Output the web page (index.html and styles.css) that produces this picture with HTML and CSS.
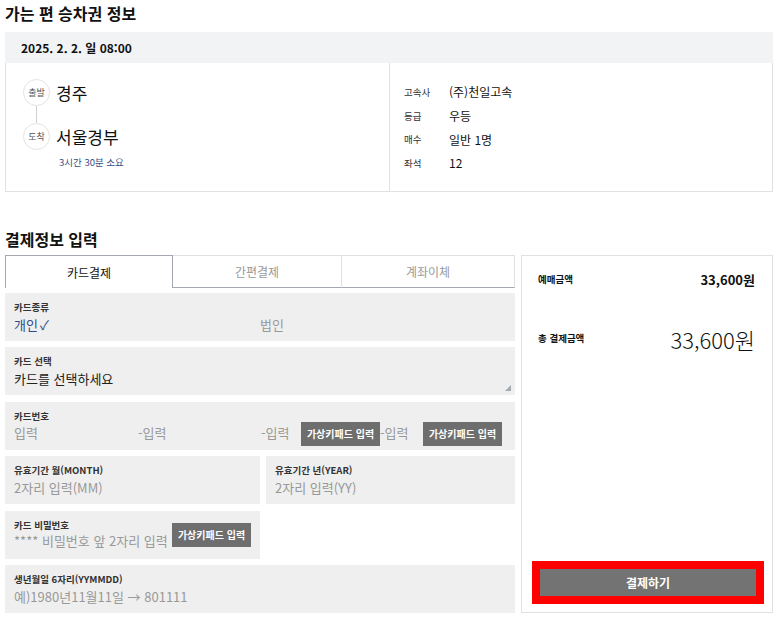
FILE: index.html
```html
<!DOCTYPE html>
<html lang="ko">
<head>
<meta charset="utf-8">
<link rel="stylesheet" href="styles.css">
</head>
<body>
<div class="page">
  <h2 class="title">가는 편 승차권 정보</h2>
  <div class="ticket">
    <div class="ticket-head">2025. 2. 2. 일 08:00</div>
    <div class="ticket-body">
      <div class="route">
        <div class="stop">
          <span class="circle">출발</span>
          <span class="place">경주</span>
        </div>
        <div class="connector"></div>
        <div class="stop">
          <span class="circle">도착</span>
          <span class="place">서울경부</span>
        </div>
        <div class="duration">3시간 30분 소요</div>
      </div>
      <div class="info">
        <div class="info-row"><span class="k">고속사</span><span class="v">(주)천일고속</span></div>
        <div class="info-row"><span class="k">등급</span><span class="v">우등</span></div>
        <div class="info-row"><span class="k">매수</span><span class="v">일반 1명</span></div>
        <div class="info-row"><span class="k">좌석</span><span class="v">12</span></div>
      </div>
    </div>
  </div>

  <h2 class="title title2">결제정보 입력</h2>
  <div class="pay">
    <div class="left">
      <div class="tabs">
        <div class="tab active t1">카드결제</div>
        <div class="tab t2">간편결제</div>
        <div class="tab t3">계좌이체</div>
      </div>
      <div class="fields">
        <div class="field">
          <div class="label">카드종류</div>
          <div class="value two">
            <span class="sel">개인<span class="check">✓</span></span>
            <span class="muted">법인</span>
          </div>
        </div>
        <div class="field textarea">
          <div class="label">카드 선택</div>
          <div class="value dark">카드를 선택하세요</div>
          <span class="grip"></span>
        </div>
        <div class="field">
          <div class="label">카드번호</div>
          <div class="value cardno">
            <span class="seg s1">입력</span>
            <span class="seg s2">-입력</span>
            <span class="seg s3">-입력</span>
            <span class="btn">가상키패드 입력</span>
            <span class="seg s4">-입력</span>
            <span class="btn">가상키패드 입력</span>
          </div>
        </div>
        <div class="row2">
          <div class="field">
            <div class="label">유효기간 월(MONTH)</div>
            <div class="value muted">2자리 입력(MM)</div>
          </div>
          <div class="field">
            <div class="label">유효기간 년(YEAR)</div>
            <div class="value muted">2자리 입력(YY)</div>
          </div>
        </div>
        <div class="row2">
          <div class="field pw">
            <div class="label">카드 비밀번호</div>
            <div class="value muted pwline"><span>**** 비밀번호 앞 2자리 입력</span><span class="btn">가상키패드 입력</span></div>
          </div>
        </div>
        <div class="field">
          <div class="label">생년월일 6자리(YYMMDD)</div>
          <div class="value muted">예)1980년11월11일 → 801111</div>
        </div>
      </div>
    </div>
    <div class="right">
      <div class="sum-row">
        <span class="sum-k">예매금액</span>
        <span class="sum-v">33,600원</span>
      </div>
      <div class="sum-row total">
        <span class="sum-k">총 결제금액</span>
        <span class="sum-big">33,600원</span>
      </div>
      <div class="pay-btn-wrap">
        <div class="pay-btn">결제하기</div>
      </div>
    </div>
  </div>
</div>
</body>
</html>
```

FILE: styles.css
```css
* { box-sizing: border-box; }
html, body { margin: 0; padding: 0; background: #fff; }
body {
  font-family: "Noto Sans CJK KR", "Noto Sans", sans-serif;
  color: #111;
}
.page { padding: 2px 7px 0 5px; width: 780px; }
.title {
  margin: 0;
  font-size: 16px;
  line-height: 22px;
  font-weight: 700;
  color: #111;
}
.title2 { margin-top: 36px; }

.ticket { margin-top: 8px; }
.ticket-head {
  height: 31px;
  background: #f2f3f5;
  font-size: 12px;
  font-weight: 700;
  line-height: 31px;
  padding-left: 16px;
}
.ticket-body {
  display: flex;
  height: 129px;
  border: 1px solid #e1e1e1;
  border-top: none;
}
.route {
  width: 384px;
  border-right: 1px solid #e1e1e1;
  padding: 16px 0 0 17px;
}
.stop { display: flex; align-items: center; }
.circle {
  width: 27px; height: 27px;
  border: 1px solid #e3e3e3;
  border-radius: 50%;
  font-size: 9px;
  color: #555;
  display: flex; align-items: center; justify-content: center;
  background: #fff;
}
.place { font-size: 17px; margin-left: 6px; line-height: 22px; color: #111; }
.connector { width: 1px; height: 17px; background: #d0d0d0; margin-left: 13px; }
.duration { font-size: 9.5px; color: #34508a; margin: 5px 0 0 36px; line-height: 14px; }

.info { padding: 17px 0 0 14px; }
.info-row { display: flex; align-items: center; height: 23.7px; }
.info-row .k { width: 45px; font-size: 9.5px; color: #333; }
.info-row .v { font-size: 12px; color: #111; }

.pay { display: flex; gap: 6px; margin-top: 5px; }
.left { width: 510px; }
.tabs { display: flex; height: 33px; }
.tab {
  display: flex; align-items: center; justify-content: center;
  font-size: 12px;
  color: #999;
  border-top: 1px solid #e0e0e0;
  border-right: 1px solid #e0e0e0;
  border-bottom: 1px solid #a3a7b0;
}
.t1 { width: 168px; }
.t2 { width: 169px; }
.t3 { flex: 1; }
.tab.active {
  color: #111;
  border: 1px solid #a3a7b0;
  border-bottom: none;
}
.fields { display: flex; flex-direction: column; gap: 6.4px; margin-top: 5px; }
.row2 { display: grid; grid-template-columns: 255px 249px; gap: 6px; }
.field {
  position: relative;
  background: #efefef;
  height: 48px;
  padding: 7px 9px 0 9px;
}
.label { font-size: 9.5px; font-weight: 700; color: #333; line-height: 14px; }
.value { font-size: 13px; line-height: 18px; margin-top: 2px; color: #333; }
.value.dark { color: #222; }
.muted { color: #999; }
.two { display: flex; }
.two .sel { width: 246px; color: #2d4a86; }
.check { margin-left: 2px; }
.grip {
  position: absolute;
  right: 4px; bottom: 4px;
  width: 0; height: 0;
  border-left: 6px solid transparent;
  border-bottom: 6px solid #a5a9b2;
}
.cardno { display: flex; align-items: center; color: #999; margin-top: -3px; }
.cardno .s1 { width: 124px; }
.cardno .s2 { width: 123px; }
.cardno .s3 { width: 40px; }
.cardno .s4 { width: 43px; }
.btn {
  display: inline-flex; align-items: center; justify-content: center;
  height: 24px;
  padding: 0 6px;
  background: #6e6e6e;
  color: #fff;
  font-size: 10px;
  font-weight: 700;
  white-space: nowrap;
}
.cardno .btn { width: 79px; margin-top: 2px; }
.pwline { display: flex; align-items: center; margin-top: 0; }
.pwline span:first-child { width: 159px; }
.pwline .btn { width: 79px; margin-top: -12px; }

.right {
  width: 252px;
  height: 358px;
  border: 1px solid #e1e1e1;
  display: flex;
  flex-direction: column;
  padding: 0 8px 8px 10px;
}
.sum-row { display: flex; justify-content: space-between; align-items: center; padding: 0 9px 0 6px; }
.sum-row:first-child { margin-top: 14px; height: 18px; }
.sum-k { font-size: 9.5px; font-weight: 700; color: #111; }
.sum-v { font-size: 13px; font-weight: 700; color: #111; }
.total { margin-top: 35px; height: 32px; }
.total .sum-k { margin-top: -3px; }
.sum-big { font-size: 22px; font-weight: 300; color: #111; }
.pay-btn-wrap {
  margin-top: auto;
  border: 8px solid #ff0000;
  height: 43px;
}
.pay-btn {
  height: 100%;
  background: #737373;
  color: #fff;
  font-size: 12px;
  font-weight: 700;
  display: flex; align-items: center; justify-content: center;
}
```
